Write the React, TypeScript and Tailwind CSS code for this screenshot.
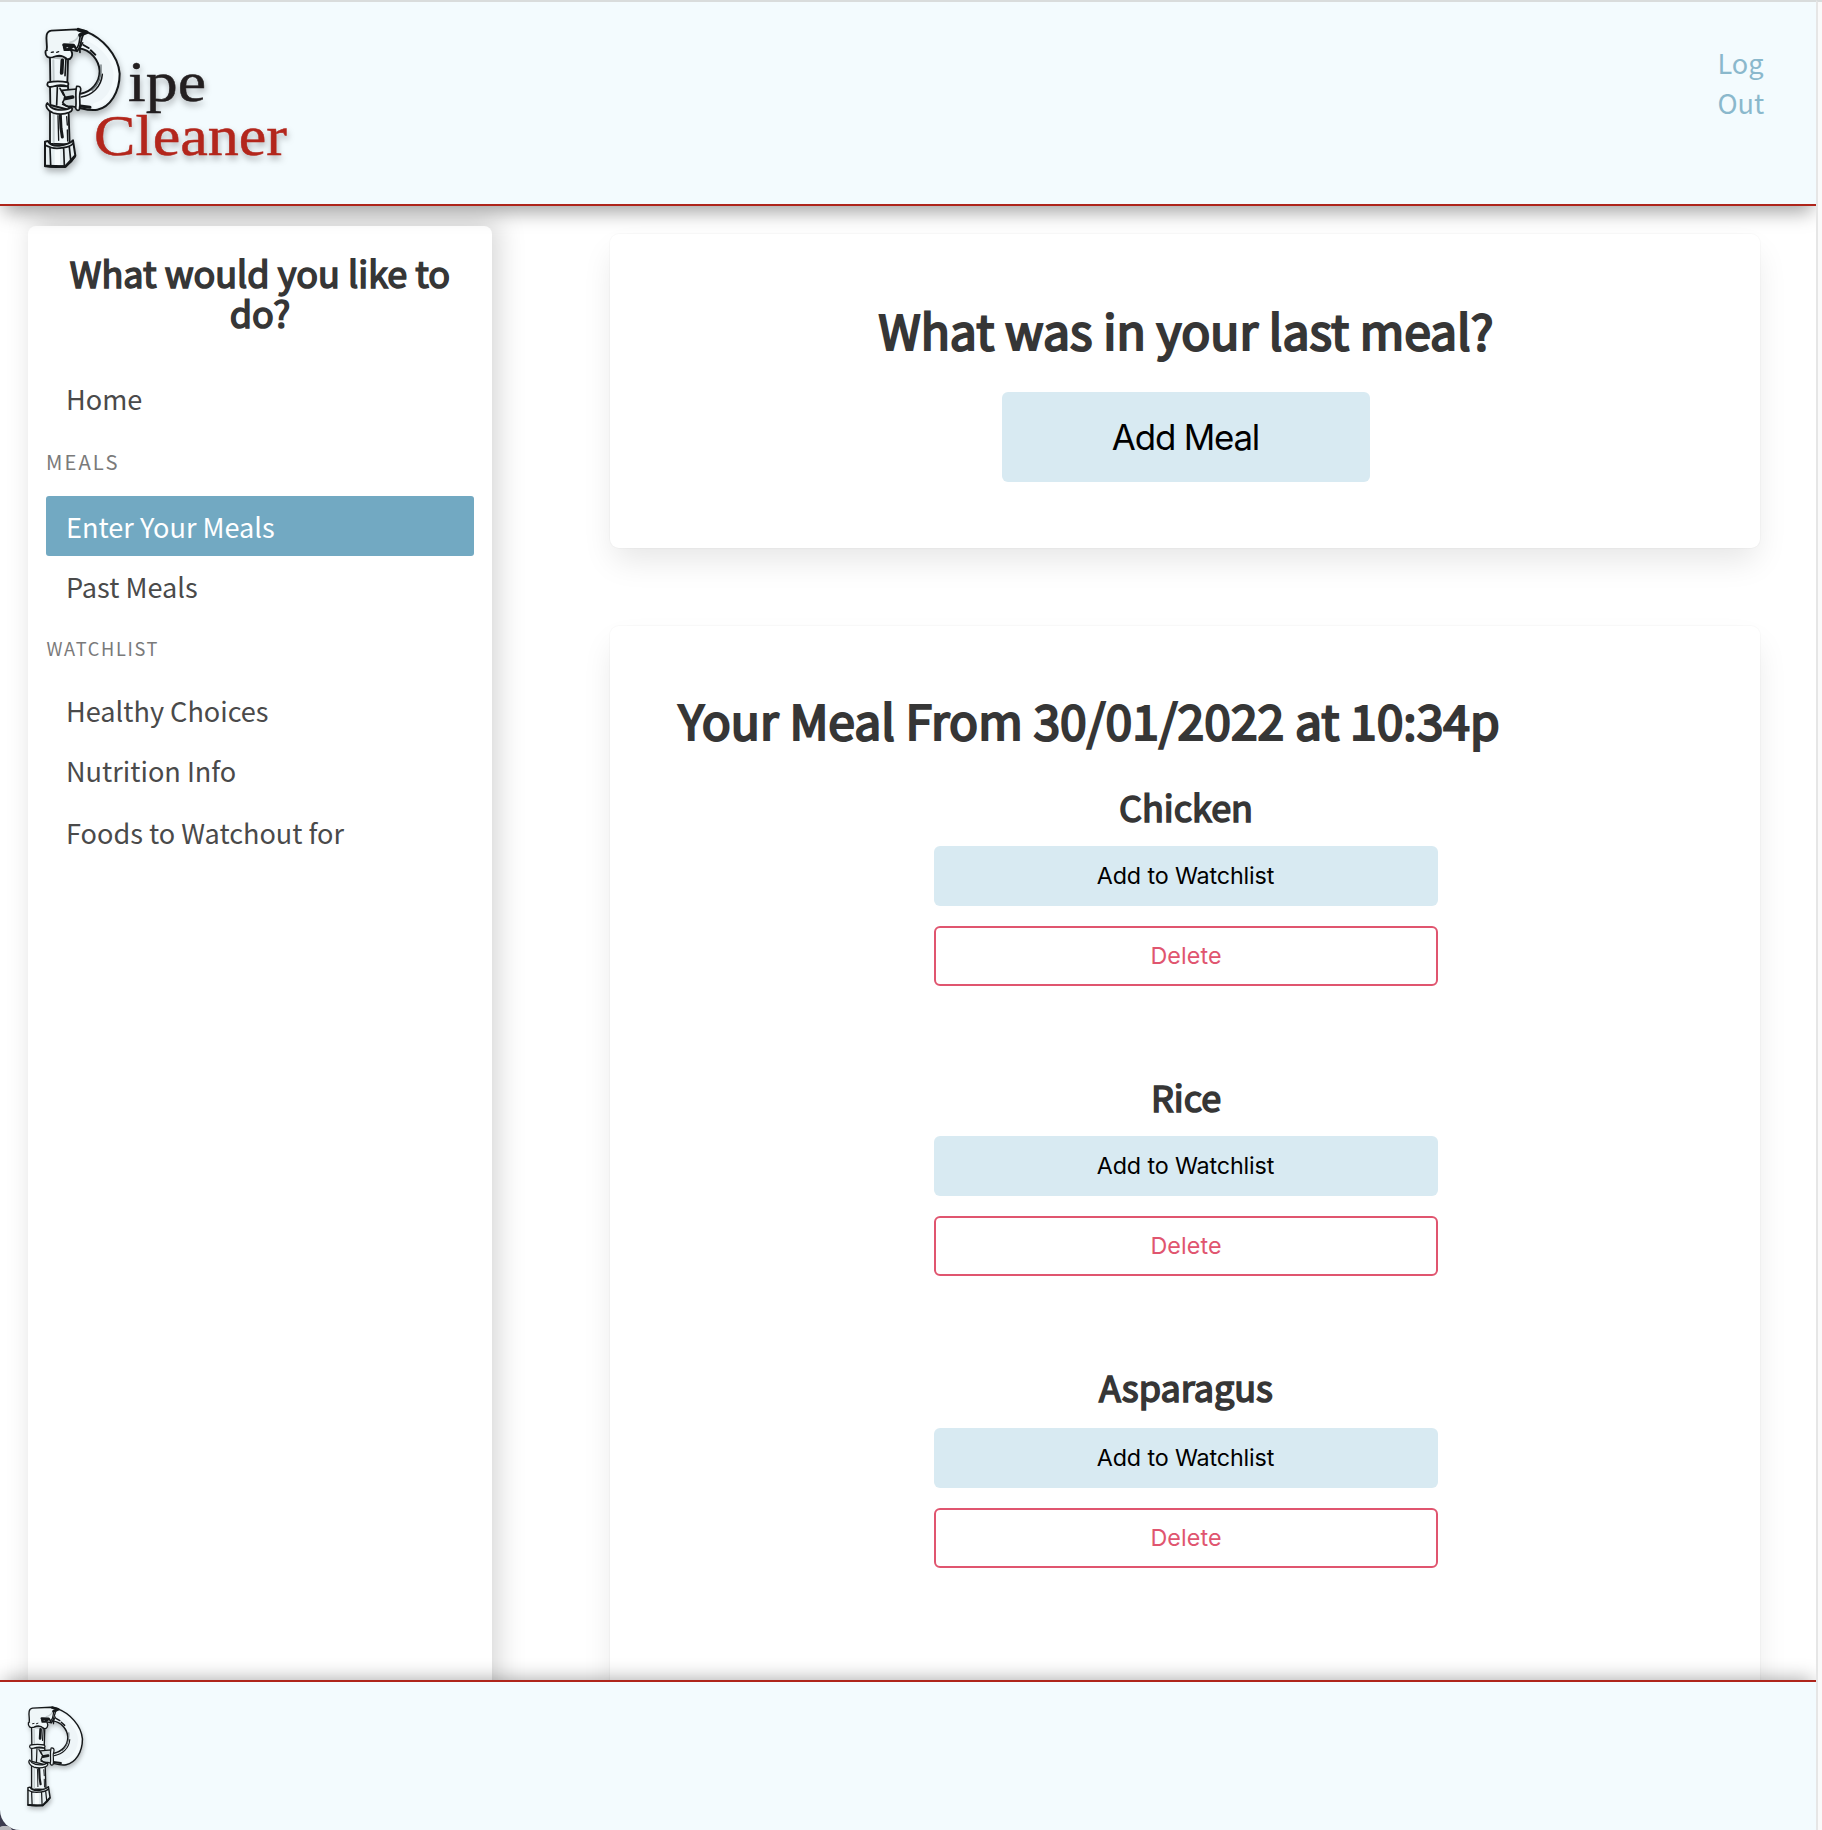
import type { ReactNode } from "react";

function PipeArt({ className }: { className: string }) {
  return (
    <svg viewBox="0 0 300 495" preserveAspectRatio="none" className={className} fill="none" stroke="#15181a" strokeLinecap="round" strokeLinejoin="round">
      {/* bent pipe */}
      <path
        d="M165 54C215 72 266 122 269 178C268 234 238 274 202 282C182 286 162 282 148 276L150 238C184 232 207 205 209 170C207 136 182 106 148 100Z"
        fill="#eef5f8"
        stroke="none"
      />
      <path d="M176 72C222 94 256 134 258 180C254 228 230 262 196 270" stroke="#f5fbfd" strokeWidth="14" />
      <path d="M168 50C215 68 264 118 269 176C269 232 240 276 202 284C184 288 166 283 150 279" strokeWidth="6" />
      <path d="M146 100C182 104 207 136 209 168C209 204 184 230 152 236" strokeWidth="6" />
      <path d="M217 178C214 216 186 240 154 246" strokeWidth="4.5" />
      <path d="M213 150C216 180 206 208 186 226" stroke="#6b7477" strokeWidth="4" />
      <path d="M160 90L176 99M182 106L196 119" strokeWidth="6" />
      <path d="M150 273L180 277" strokeWidth="9" />
      {/* elbow */}
      <path d="M50 106C53 90 47 76 50 60Q52 49 64 47L138 43L166 48C150 66 158 88 142 108L122 104L116 122L60 124Z" fill="#eff6f8" strokeWidth="5.5" />
      <path d="M120 82Q138 80 146 62" stroke="#c3ccce" strokeWidth="5" />
      <path d="M145 44L170 52L150 60" strokeWidth="11" />
      <path d="M152 60C146 74 152 88 138 102" strokeWidth="5" />
      <path d="M158 84Q148 96 150 112" strokeWidth="5" />
      <path d="M102 90L130 92L118 100L108 112L104 96" strokeWidth="11" />
      <path d="M134 94L140 106" strokeWidth="7" />
      <path d="M47 108C44 124 55 132 70 126C85 119 100 122 110 132C124 136 130 120 124 108" fill="#eff6f8" strokeWidth="5.5" />
      <path d="M64 112L70 111M80 112L86 110" strokeWidth="4" />
      {/* upper pipe */}
      <path d="M60 130L61 200L112 202L114 136" fill="#eff6f8" strokeWidth="5.5" />
      <path d="M70 136L71 196" stroke="#c3ccce" strokeWidth="6" />
      <path d="M97 136L95 174" strokeWidth="11" />
      <path d="M108 130L105 182" strokeWidth="5" />
      {/* ring and tee */}
      <path d="M60 212L61 270L118 285L114 214Z" fill="#e6eef0" strokeWidth="5.5" />
      <path d="M54 202C48 212 56 218 66 215Q92 206 112 214Q118 208 113 202Q84 196 54 202Z" fill="#eff6f8" strokeWidth="5" />
      <path d="M96 226L140 222L144 278L126 274Q106 276 98 262L106 248Z" fill="#d3dcde" strokeWidth="5" />
      <path d="M140 214Q154 212 152 226C144 244 154 262 148 284Q142 290 137 280C141 258 134 238 140 214Z" fill="#eff6f8" strokeWidth="5" />
      <path d="M106 250L128 246" strokeWidth="11" />
      <path d="M90 220L101 240M98 268L120 278M82 218L80 270" strokeWidth="5" />
      {/* lower pipe */}
      <path d="M60 290L60 386L119 388L116 296" fill="#eff6f8" strokeWidth="5.5" />
      <path d="M71 298L71 382" stroke="#c3ccce" strokeWidth="6" />
      <path d="M91 300L93 340L97 366" strokeWidth="9" />
      <path d="M110 305L112 330M112 345L113 378M84 302L86 376" strokeWidth="4" />
      <path d="M52 264C44 272 52 288 70 294Q96 302 118 292Q130 286 125 276C112 288 78 288 62 276Z" fill="#eff6f8" strokeWidth="5" />
      {/* hex nut */}
      <path d="M45 380L45 452Q76 460 108 453Q126 440 136 422L129 376Q118 388 88 392Q62 394 54 378Z" fill="#e6eef0" strokeWidth="6" />
      <path d="M82 408L82 446" stroke="#f8fcfd" strokeWidth="16" />
      <path d="M46 391Q68 404 100 398Q120 396 129 386M60 398L62 450M101 400L103 450M118 396L122 434" strokeWidth="5" />
      <path d="M46 453L106 455L134 424" strokeWidth="8" />
    </svg>
  );
}

function Logo() {
  return (
    <div className="relative ml-[30px] mt-[13px] h-[165px] w-[270px] drop-shadow-[1px_4px_3px_rgba(0,0,0,0.28)]">
      <PipeArt className="h-[165px] w-[100px]" />
      <svg viewBox="0 0 270 165" className="absolute inset-0 h-[165px] w-[270px] font-['Liberation_Serif',serif]">
        <text x="98" y="85.5" fontSize="58" textLength="78" lengthAdjust="spacingAndGlyphs" fill="#231f20" stroke="#231f20" strokeWidth="0.5">
          ipe
        </text>
        <text x="64" y="139.5" fontSize="57.5" textLength="193" lengthAdjust="spacingAndGlyphs" fill="#b3261c" stroke="#b3261c" strokeWidth="0.5">
          Cleaner
        </text>
      </svg>
    </div>
  );
}

function NavItem({ children, active = false }: { children: ReactNode; active?: boolean }) {
  return (
    <li className={active ? "h-[60px] rounded-[3px] bg-[#72a9c2] pl-[20px] text-white" : "h-[60px] pl-[20px] text-[#4a4a4a]"}>
      {children}
    </li>
  );
}

function Card({ children, className }: { children: ReactNode; className: string }) {
  return (
    <section
      className={`rounded-[9px] bg-white shadow-[0_16px_32px_-4px_rgba(10,10,10,0.1),0_0_0_1px_rgba(10,10,10,0.02)] ${className}`}
    >
      {children}
    </section>
  );
}

function FoodItem({ name, className = "", gap = "mt-[20px]" }: { name: string; className?: string; gap?: string }) {
  return (
    <div className={`flex flex-col items-center ${className}`}>
      <h3 className="text-[36px] leading-[40px] text-[#363636] [-webkit-text-stroke:1.6px_#363636]">{name}</h3>
      <button className={`${gap} h-[60px] w-[504px] rounded-[6px] bg-[#d8eaf2] pr-[1px] font-['Inter',sans-serif] text-[23.3px] tracking-[-0.14px] text-black`}>
        Add to Watchlist
      </button>
      <button className="mt-[20px] h-[60px] w-[504px] rounded-[6px] border-2 border-[#e0556f] bg-white font-['Inter',sans-serif] text-[23.3px] tracking-[0.1px] text-[#e0556f]">
        Delete
      </button>
    </div>
  );
}

export default function App() {
  return (
    <div className="flex h-[1830px] w-[1822px] overflow-hidden bg-[#fafafa] font-['Noto_Sans_CJK_SC',sans-serif]">
      <div className="flex w-[1816px] shrink-0 flex-col overflow-hidden bg-white">
        <header className="relative z-10 flex h-[206px] shrink-0 justify-between border-t-2 border-b-2 border-t-[#d9dcdc] border-b-[#ae251b] bg-[#f3fbfe] shadow-[0_10px_18px_-4px_rgba(0,0,0,0.36)]">
          <Logo />
          <a className="mt-[41px] mr-[44.5px] w-[54px] text-[27.1px] leading-[40px] text-[#8ab8cc]">Log Out</a>
        </header>

        <div className="flex min-h-0 flex-1 overflow-hidden">
          <aside className="mt-[20px] ml-[28px] h-[1600px] w-[464px] shrink-0 rounded-[8px] bg-white px-[18px] shadow-[6px_-6px_28px_rgba(0,0,0,0.17)]">
            <h2 className="mt-[26px] text-center text-[36px] leading-[40px] text-[#363636] [-webkit-text-stroke:1.6px_#363636]">
              What would you like to do?
            </h2>
            <nav className="mt-[34px] text-[27.1px]">
              <ul className="leading-[66px]">
                <NavItem>Home</NavItem>
              </ul>
              <p className="mt-[21px] text-[20.2px] leading-[30px] tracking-[2.1px] text-[#7a7a7a]">MEALS</p>
              <ul className="mt-[19px] leading-[62px]">
                <NavItem active>Enter Your Meals</NavItem>
                <NavItem>Past Meals</NavItem>
              </ul>
              <p className="mt-[17px] pl-[0.5px] text-[18.2px] leading-[30px] tracking-[1.65px] text-[#7a7a7a]">WATCHLIST</p>
              <ul className="mt-[15px] leading-[66px]">
                <NavItem>Healthy Choices</NavItem>
                <NavItem>Nutrition Info</NavItem>
              </ul>
              <ul className="mt-[2px] leading-[66px]">
                <NavItem>Foods to Watchout for</NavItem>
              </ul>
            </nav>
          </aside>

          <main className="ml-[118px] w-[1150px] pt-[28px]">
            <Card className="flex h-[314px] flex-col items-center pt-[68px] pl-[2px]">
              <h1 className="text-[48px] leading-[54px] text-[#363636] [-webkit-text-stroke:2.2px_#363636]">
                What was in your last meal?
              </h1>
              <button className="mt-[36px] h-[90px] w-[368px] rounded-[6px] bg-[#d8eaf2] pr-[1px] font-['Inter',sans-serif] text-[34.9px] tracking-[-1.2px] text-black">
                Add Meal
              </button>
            </Card>

            <Card className="mt-[78px] h-[1200px] pt-[66px] pr-[68px] pl-[70px]">
              <h1 className="-ml-[1.5px] text-[48px] leading-[54px] text-[#363636] [-webkit-text-stroke:2.2px_#363636]">
                Your Meal From 30/01/2022 at 10:34p
              </h1>
              <FoodItem name="Chicken" className="mt-[40px]" />
              <FoodItem name="Rice" className="mt-[90px]" />
              <FoodItem name="Asparagus" className="mt-[90px]" gap="mt-[22px]" />
            </Card>
          </main>
        </div>

        <footer className="relative z-10 h-[150px] shrink-0 bg-[#3f3e52]">
          <div className="absolute bottom-[-6px] left-[-2px] h-[10px] w-[14px] rounded-full bg-[#b9b9bd]" />
          <div className="h-full rounded-bl-[20px] border-t-2 border-[#ae251b] bg-[#f3fbfe] pt-[15px] pl-[17px] shadow-[0_-4px_20px_-4px_rgba(0,0,0,0.36)]">
            <PipeArt className="h-[118px] w-[73px] drop-shadow-[1px_3px_2px_rgba(0,0,0,0.24)]" />
          </div>
        </footer>
      </div>
      <div className="w-[6px] shrink-0 border-t-2 border-l-2 border-t-[#d9dcdc] border-l-[#e6e6e6]" />
    </div>
  );
}
